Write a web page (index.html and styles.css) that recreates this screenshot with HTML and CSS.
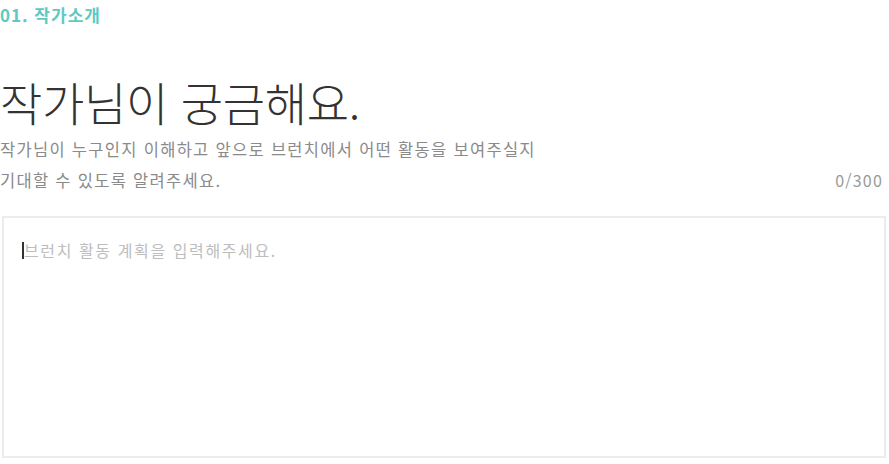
FILE: index.html
```html
<html lang="ko">
<head>
    <meta charset="UTF-8">
    <title>작가소개</title>
    <link rel="stylesheet" href="styles.css">
</head>
<body>
<div id="intro">
    <p class="step">01. 작가소개</p>
    <h2 class="title">작가님이 궁금해요.</h2>
    <div class="desc-row">
        <p class="desc">작가님이 누구인지 이해하고 앞으로 브런치에서 어떤 활동을 보여주실지<br>기대할 수 있도록 알려주세요.</p>
        <span class="count">0/300</span>
    </div>
    <div class="write-box">
        <span class="caret"></span><span class="holder">브런치 활동 계획을 입력해주세요.</span>
    </div>
</div>
</body>
</html>
```

FILE: styles.css
```css
*{
    padding:0px;
    margin:0px;
}
body{
    font-family:"Noto Sans CJK KR","Noto Sans",sans-serif;
    background:#fff;
    color:#333;
}
#intro{
    width:886px;
}
#intro .step{
    font-size:17px;
    font-weight:bold;
    color:#5ec9c3;
    line-height:20px;
    padding-top:5px;
    letter-spacing:1px;
}
#intro .title{
    font-size:46px;
    font-weight:300;
    color:#333;
    line-height:50px;
    margin-top:51px;
    letter-spacing:-0.3px;
}
#intro .desc-row{
    display:flex;
    justify-content:space-between;
    align-items:flex-end;
    margin-top:8px;
}
#intro .desc{
    font-size:16.5px;
    color:#8a8a8a;
    line-height:31px;
    letter-spacing:1.3px;
}
#intro .count{
    font-size:16px;
    color:#9a9a9a;
    line-height:31px;
    padding-right:3px;
    letter-spacing:1.2px;
}
#intro .write-box{
    box-sizing:border-box;
    margin:20px 0px 0px 2px;
    height:242px;
    border:2px solid #ececec;
    padding:21px 18px;
    display:flex;
    align-items:flex-start;
}
#intro .write-box .caret{
    width:2px;
    height:17px;
    background:#333;
    margin-top:3px;
}
#intro .write-box .holder{
    font-size:16px;
    color:#bdbdbd;
    line-height:22px;
    letter-spacing:1.6px;
}
```
